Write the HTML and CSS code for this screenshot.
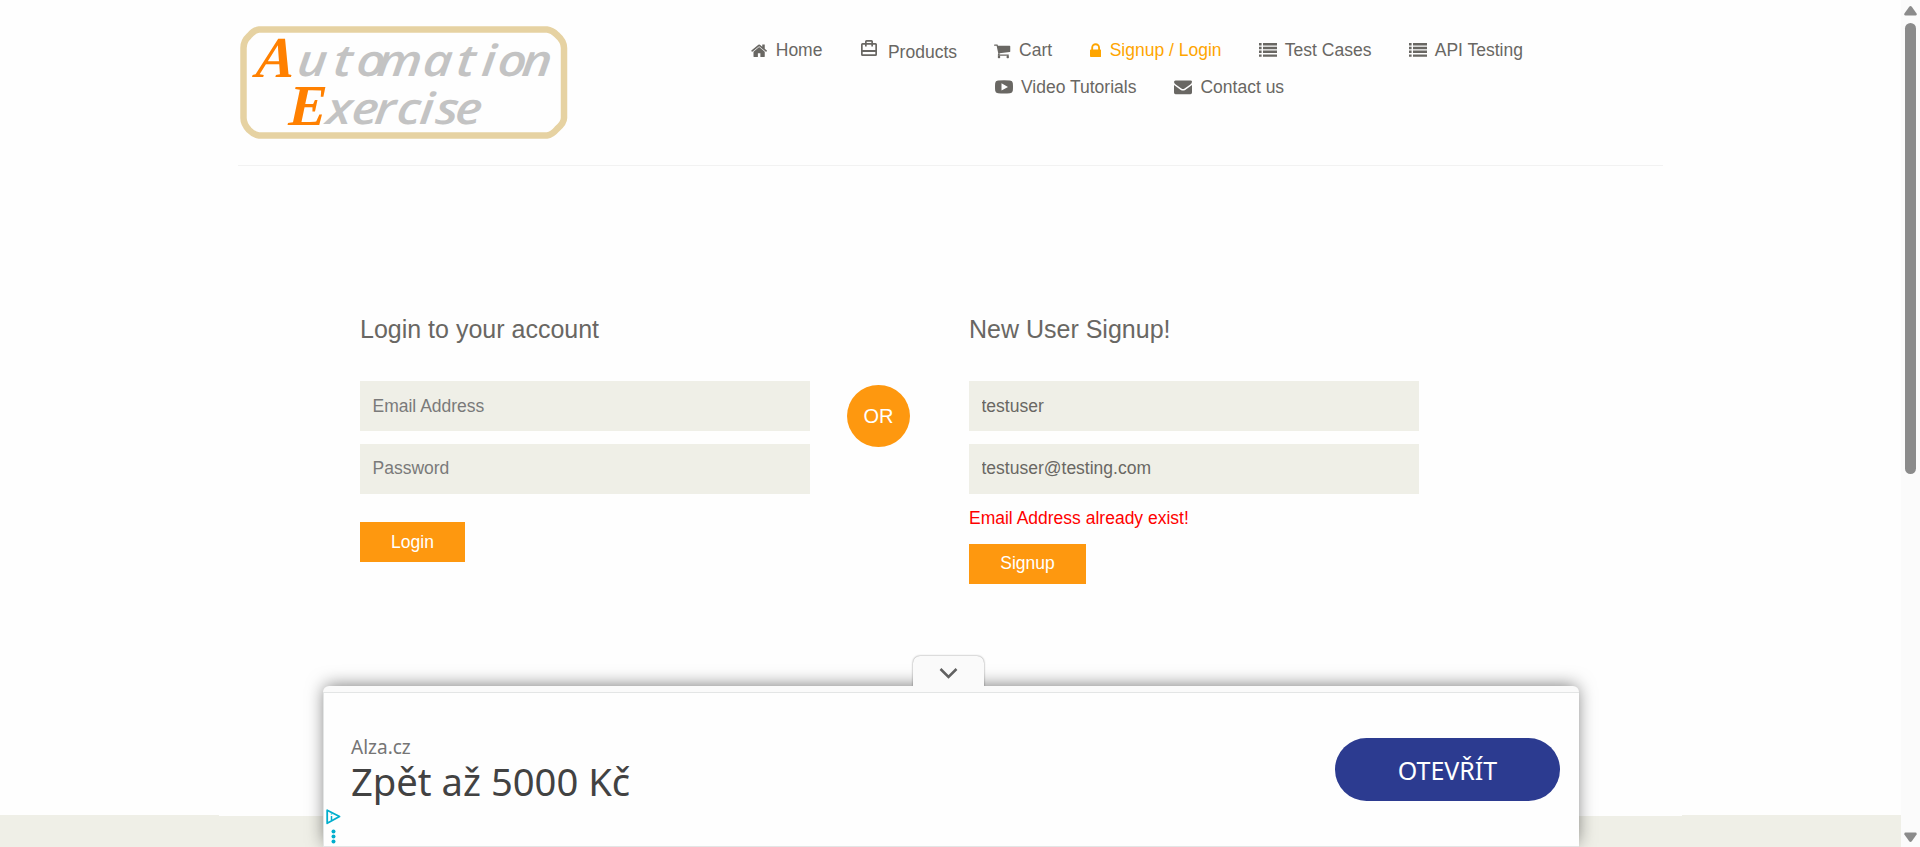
FILE: index.html
```html
<!DOCTYPE html>
<html lang="en">
<head>
<meta charset="utf-8">
<title>Automation Exercise - Signup / Login</title>
<link rel="stylesheet" href="styles.css">
</head>
<body>
<div class="page">
  <header class="header">
    <a class="logo" href="#">
      <svg width="328" height="113" viewBox="0 0 328 113" role="img" aria-label="Automation Exercise">
        <path class="logo-frame" d="M20 3.500H308Q313 4 318 9Q325 15 325 22V92Q325 97 318 103Q313 109 308 109.500H20Q15 109 10 104Q4.500 98 4.500 92V22Q4.500 15 10 10Q15 4 20 3.500Z"/>
        <text class="logo-cap" transform="translate(16 51) skewX(-6)">A</text>
        <text class="logo-cap" transform="translate(49 99) skewX(-2)">E</text>
        <text class="logo-text" transform="translate(0 50) skewX(-6) scale(1.150 1)" x="49.500 81 101 119 159 188 210 224 245">utomation</text>
        <text class="logo-text" transform="translate(0 98) skewX(-6) scale(1.150 1)" x="75 97 117 136 156 170 187">xercise</text>
      </svg>
    </a>
    <nav class="nav">
      <ul class="nav-row">
        <li><a href="#"><svg width="16.25" height="17.5" viewBox="64 0 1664 1792"><path d="M1472 992v480q0 26-19 45t-45 19h-384v-384h-256v384h-384q-26 0-45-19t-19-45v-480q0-1 .5-3t.5-3l575-474 575 474q1 2 1 6zm223-69l-62 74q-8 9-21 11h-3q-13 0-21-7l-692-577-692 577q-12 8-24 7-13-2-21-11l-62-74q-8-10-7-23.500t11-21.500l719-599q32-26 76-26t76 26l244 204v-195q0-14 9-23t23-9h192q14 0 23 9t9 23v408l219 182q10 8 11 21.500t-7 23.500z"/></svg>Home</a></li>
        <li class="nav-products"><a href="#"><svg width="22" height="22" viewBox="0 0 22 22"><path fill-rule="evenodd" d="M7 3.500Q7 2 8.500 2H13.500Q15 2 15 3.500V5H17.500Q19 5 19 6.500V16.500Q19 18 17.500 18H4.500Q3 18 3 16.500V6.500Q3 5 4.500 5H7ZM8.700 3.700V5H13.300V3.700ZM4.700 6.700V12H17.300V6.700H15V8.500H13.300V6.700H8.700V8.500H7V6.700ZM4.700 14V16.300H17.300V14Z"/></svg>Products</a></li>
        <li><a href="#"><svg width="16.25" height="17.5" viewBox="64 0 1664 1792"><path d="M704 1536q0 52-38 90t-90 38-90-38-38-90 38-90 90-38 90 38 38 90zm896 0q0 52-38 90t-90 38-90-38-38-90 38-90 90-38 90 38 38 90zm128-1088v512q0 24-16.500 42.500t-40.500 21.500l-1044 122q13 60 13 70 0 16-24 64h920q26 0 45 19t19 45-19 45-45 19h-1024q-26 0-45-19t-19-45q0-11 8-31.500t16-36 21.500-40 15.500-29.500l-177-823h-204q-26 0-45-19t-19-45 19-45 45-19h256q16 0 28.500 6.500t19.500 15.500 13 24.500 8 26 5.500 29.500 4.500 26h1201q26 0 45 19t19 45z"/></svg>Cart</a></li>
        <li><a class="active" href="#"><svg width="11.25" height="17.5" viewBox="320 0 1152 1792"><path d="M640 768h512v-192q0-106-75-181t-181-75-181 75-75 181v192zm832 96v576q0 40-28 68t-68 28h-960q-40 0-68-28t-28-68v-576q0-40 28-68t68-28h32v-192q0-184 132-316t316-132 316 132 132 316v192h32q40 0 68 28t28 68z"/></svg>Signup / Login</a></li>
        <li><a href="#"><svg width="18" height="17.5" viewBox="0 0 18 17.5"><path d="M0 1h2.600v2.400H0zM4 1h14v2.400H4zM0 4.800h2.600v2.400H0zM4 4.800h14v2.400H4zM0 8.600h2.600v2.400H0zM4 8.600h14v2.400H4zM0 12.400h2.600v2.400H0zM4 12.400h14v2.400H4z"/></svg>Test Cases</a></li>
        <li><a href="#"><svg width="18" height="17.5" viewBox="0 0 18 17.5"><path d="M0 1h2.600v2.400H0zM4 1h14v2.400H4zM0 4.800h2.600v2.400H0zM4 4.800h14v2.400H4zM0 8.600h2.600v2.400H0zM4 8.600h14v2.400H4zM0 12.400h2.600v2.400H0zM4 12.400h14v2.400H4z"/></svg>API Testing</a></li>
      </ul>
      <ul class="nav-row nav-row-second">
        <li><a href="#"><svg width="18" height="17.5" viewBox="0 0 18 17.5"><path fill-rule="evenodd" d="M3 1.500Q9 .9 15 1.500Q17.600 1.700 17.800 4Q18.200 8 17.800 11.700Q17.600 14 15 14.300Q9 14.800 3 14.300Q.4 14 .2 11.700Q-.2 8 .2 4Q.4 1.700 3 1.500ZM6.500 4.300V11.500L13 7.900Z"/></svg>Video Tutorials</a></li>
        <li><a href="#"><svg width="18" height="17.5" viewBox="0 0 18 17.5"><path d="M1.500 1.500H16.500Q18 1.500 18 2.800Q18 4.300 16.300 5.500L10.600 9.500Q9 10.600 7.400 9.500L1.700 5.500Q0 4.300 0 3Q0 1.500 1.500 1.500ZM0 6.100L6.800 10.900Q9 12.200 11.200 10.900L18 6.100V13.500Q18 15.200 16.400 15.200H1.600Q0 15.200 0 13.500Z"/></svg>Contact us</a></li>
      </ul>
    </nav>
  </header>

  <main class="forms">
    <form class="form form-login">
      <h2>Login to your account</h2>
      <input type="email" placeholder="Email Address">
      <input class="second" type="password" placeholder="Password">
      <button type="button">Login</button>
    </form>
    <div class="or">OR</div>
    <form class="form form-signup">
      <h2>New User Signup!</h2>
      <input type="text" value="testuser">
      <input class="second" type="email" value="testuser@testing.com">
      <p class="error">Email Address already exist!</p>
      <button type="button">Signup</button>
    </form>
  </main>

  <footer class="footer"><div class="footer-inner"></div></footer>
</div>

<div class="scrollbar">
  <svg width="13" height="10" viewBox="0 0 13 10"><path d="M5.200 .8Q6.500 -.6 7.800 .8L12.600 7.600Q13 9.500 11.500 9.500H1.500Q0 9.500 .4 7.600Z"/></svg>
  <div class="thumb"></div>
  <svg width="13" height="10" viewBox="0 0 13 10"><path d="M5.200 9.200Q6.500 10.600 7.800 9.200L12.600 2.400Q13 .5 11.500 .5H1.500Q0 .5 .4 2.400Z"/></svg>
</div>

<aside class="ad">
  <button class="ad-toggle" type="button" aria-label="Collapse">
    <svg width="20" height="13" viewBox="0 0 20 13"><path d="M1.500 2L9.500 10L17.500 2"/></svg>
  </button>
  <div class="ad-body">
    <div class="ad-copy">
      <span class="ad-brand">Alza.cz</span>
      <span class="ad-title">Zpět až 5000 Kč</span>
    </div>
    <a class="ad-cta" href="#">OTEVŘÍT</a>
    <svg class="ad-marks" width="16" height="36" viewBox="0 0 16 36">
      <path class="ad-choice" d="M1.200 1.200L13.500 7.500L1.200 14.300Z"/>
      <path class="ad-choice-i" d="M5.500 7V11M5.500 4.500V5.600"/>
      <circle cx="7.500" cy="22.500" r="2"/><circle cx="7.500" cy="27.500" r="2"/><circle cx="7.500" cy="32.500" r="2"/>
    </svg>
  </div>
</aside>
</body>
</html>
```

FILE: styles.css
```css
* { box-sizing: border-box; }

body {
  margin: 0;
  height: 847px;
  display: flex;
  overflow: hidden;
  background: #fefefe;
  color: #696763;
  font-family: "Liberation Sans", Arial, sans-serif;
  font-size: 17.5px;
}

.page {
  width: 1901px;
  height: 847px;
  display: flex;
  flex-direction: column;
}

/* Header */
.header {
  width: 1425px;
  height: 166px;
  margin: 0 auto;
  display: flex;
  border-bottom: 1px solid #f2f2f2;
  flex-shrink: 0;
}

.logo { width: 513px; padding: 26px 0 0 1px; }
.logo svg { display: block; overflow: visible; }
.logo-frame { fill: none; stroke: #e6d2a2; stroke-width: 6.500; }
.logo-text {
  font: italic 600 44px "Open Sans", sans-serif;
  fill: #c3c3c3;
}
.logo-cap {
  font: italic bold 58px "Liberation Serif", serif;
  fill: #ff8000;
}

.nav { padding-top: 38px; }
.nav-row {
  display: flex;
  gap: 37.5px;
  margin: 0;
  padding: 0;
  height: 37px;
  list-style: none;
}
.nav-row-second { padding-left: 243.5px; }
.nav a {
  display: flex;
  gap: 8.500px;
  line-height: 25px;
  color: #696763;
  text-decoration: none;
  white-space: nowrap;
}
.nav svg { fill: currentColor; margin-top: 3.500px; flex-shrink: 0; }
.nav a.active { color: #fea500; }
.nav-products a { padding-top: 2px; gap: 8px; }
.nav-products { margin: 0 -0.500px 0 -2px; }
.nav-products svg { margin-top: -2px; }
.nav li:nth-child(n+3) { margin-left: 0.300px; }
.nav li:nth-child(n+5) a { gap: 7.500px; }

/* Forms */
.forms {
  display: flex;
  align-items: flex-start;
  padding: 149px 0 0 360px;
  flex: 1;
}
.form { width: 450px; display: flex; flex-direction: column; align-items: flex-start; }
.form h2 {
  margin: 0 0 37px;
  font-size: 25px;
  line-height: 29px;
  font-weight: normal;
}
.form input {
  width: 100%;
  height: 50px;
  margin: 0 0 13px;
  padding: 0 0 0 12.500px;
  border: 0;
  background: #efefe7;
  color: #696763;
  font: 17.5px "Liberation Sans", Arial, sans-serif;
}
.form input.second { padding-bottom: 2px; }
.form input::placeholder { color: #7a7a7a; opacity: 1; }
.form button {
  height: 40px;
  padding: 0 31px;
  border: 0;
  background: #fe980f;
  color: #fff;
  font: 17.5px "Liberation Sans", Arial, sans-serif;
}
.form-login button { margin-top: 15px; width: 105px; }
.form-signup button { width: 117px; padding-bottom: 2px; }
.error { margin: -1px 0 13px; line-height: 25px; color: #f00; }
.or {
  width: 63px;
  height: 62px;
  margin: 70px 59px 0 37px;
  border-radius: 50%;
  background: #fe980f;
  color: #fff;
  font-size: 20px;
  line-height: 62px;
  text-align: center;
}

/* Footer */
.footer { height: 32px; background: #efefe7; flex-shrink: 0; }
.footer-inner { width: 1463px; height: 1px; margin: 0 auto; background: #fefefe; }

/* Scrollbar */
.scrollbar {
  width: 19px;
  height: 847px;
  padding: 6px 0 5px 3px;
  display: flex;
  flex-direction: column;
  justify-content: space-between;
  align-items: flex-start;
  background: #fbfbfb;
}
.scrollbar svg { fill: #8b8b8b; }
.thumb {
  width: 11px;
  height: 451px;
  margin: 7px 0 auto 1px;
  border-radius: 6px;
  background: #8b8b8b;
}

/* Anchored ad */
.ad {
  position: absolute;
  left: 323px;
  bottom: 0;
  width: 1256px;
  height: 161px;
  padding-top: 6px;
  border-radius: 6px 6px 0 0;
  background: #fafafa;
  box-shadow: 0 -2px 18px -2px rgba(0, 0, 0, .55);
}
.ad-toggle {
  position: absolute;
  left: 590px;
  top: -30px;
  width: 71px;
  height: 30px;
  padding: 8px 0 0;
  border: 0;
  border-radius: 7px 7px 0 0;
  background: #fafafa;
  box-shadow: 0 0 2px rgba(0, 0, 0, .5);
  clip-path: inset(-8px -8px 0);
}
.ad-toggle svg { fill: none; stroke: #616161; stroke-width: 2.500; }
.ad-body {
  height: 155px;
  padding: 0 19px 0 27px;
  display: flex;
  justify-content: space-between;
  border: 1px solid #e3e5e5;
  border-right: 0;
  background: #fefefe;
  font-family: "Noto Sans", "Open Sans", sans-serif;
}
.ad-copy { display: flex; flex-direction: column; padding-top: 41px; }
.ad-brand { font-size: 19px; line-height: 24px; padding-top: 1px; color: #757575; }
.ad-title { margin-top: -1px; font-size: 38.200px; line-height: 46px; color: #424242; white-space: nowrap; }
.ad-cta {
  width: 225px;
  height: 63px;
  margin-top: 45px;
  border-radius: 32px;
  background: #2c3b90;
  color: #fff;
  font-size: 25px;
  line-height: 65px;
  text-align: center;
  text-decoration: none;
}
.ad-marks { position: absolute; left: 3px; bottom: 2px; fill: #00aecd; }
.ad-choice { fill: none; stroke: #00aecd; stroke-width: 1.800; stroke-linejoin: round; }
.ad-choice-i { stroke: #00aecd; stroke-width: 1.500; }
```
